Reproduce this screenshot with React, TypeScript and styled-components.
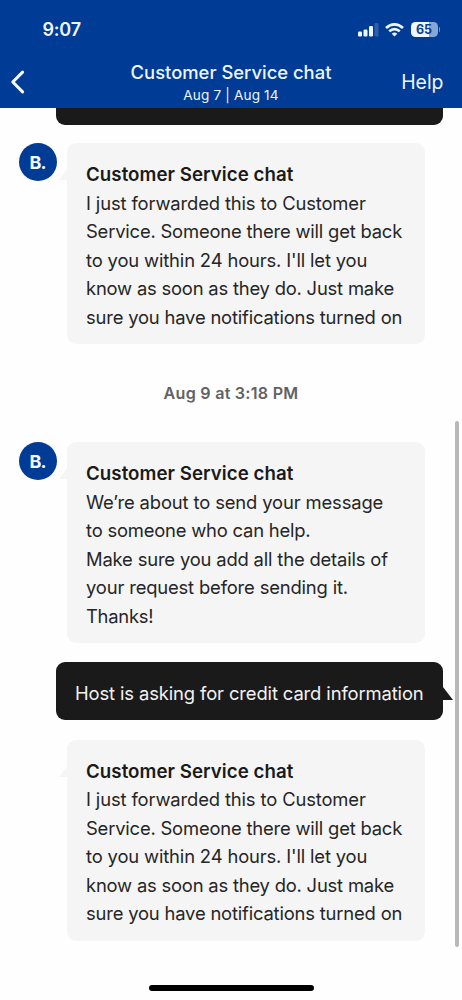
import React from "react";
import styled, { createGlobalStyle } from "styled-components";

const GlobalStyle = createGlobalStyle`
  * { box-sizing: border-box; }
  body {
    margin: 0;
    background: #fff;
    font-family: Inter, "Liberation Sans", sans-serif;
    overflow: hidden;
  }
`;

const Screen = styled.div`
  position: relative;
  width: 462px;
  height: 1000px;
  display: flex;
  flex-direction: column;
  background: #fefefe;
  overflow: hidden;
`;

const Header = styled.header`
  flex: none;
  height: 107.5px;
  background: #003b95;
  color: #edf6ff;
`;

const StatusBar = styled.div`
  height: 58px;
  padding: 1px 22.5px 0 42.5px;
  display: flex;
  align-items: center;
  justify-content: space-between;
`;

const Clock = styled.span`
  font-size: 18px;
  font-weight: 600;
  letter-spacing: -0.2px;
`;

const StatusIcons = styled.div`
  display: flex;
  align-items: center;
  gap: 6.3px;
`;

const Battery = styled.div`
  position: relative;
  width: 27px;
  height: 15px;
  border-radius: 4.5px;
  background: linear-gradient(90deg, #eef6ff 66%, #86a6d6 66%);
  color: #0c3f93;
  font-size: 12.5px;
  font-weight: 700;
  line-height: 15px;
  text-align: center;
  margin-right: 2px;
  &::after {
    content: "";
    position: absolute;
    right: -2.5px;
    top: 5px;
    width: 1.5px;
    height: 5px;
    border-radius: 0 2px 2px 0;
    background: #6f92c9;
  }
`;

const NavBar = styled.nav`
  height: 49.5px;
  display: grid;
  grid-template-columns: 100px 1fr 100px;
  align-items: center;
`;

const BackIcon = styled.svg`
  margin: 0 0 2px 10px;
`;

const Heading = styled.div`
  display: flex;
  flex-direction: column;
  align-items: center;
  white-space: nowrap;
`;

const Title = styled.span`
  font-size: 18.4px;
  line-height: 25px;
  font-weight: 500;
`;

const Dates = styled.span`
  font-size: 13.6px;
  line-height: 20px;
  letter-spacing: 0.15px;
`;

const Help = styled.a`
  justify-self: end;
  margin-right: 18.5px;
  padding-bottom: 1px;
  font-size: 19.4px;
`;

const Thread = styled.main`
  flex: 1;
  display: flex;
  flex-direction: column;
`;

const SentBubble = styled.div<{ $clipped?: boolean }>`
  position: relative;
  margin: 0 19px 0 55.5px;
  height: ${(p) => (p.$clipped ? "17px" : "58.5px")};
  padding: 4px 0 0 19.5px;
  display: flex;
  align-items: center;
  border-radius: ${(p) => (p.$clipped ? "0 0 9px 9px" : "9px")};
  background: #1a1a1a;
  color: #f2f2f2;
  font-size: 18.4px;
  letter-spacing: -0.12px;
  white-space: nowrap;
`;

const SentTail = styled.svg`
  position: absolute;
  right: -9.5px;
  top: 25px;
`;

const Row = styled.div<{ $top: number }>`
  display: flex;
  align-items: flex-start;
  margin-top: ${(p) => p.$top}px;
`;

const Avatar = styled.div<{ $hidden?: boolean }>`
  width: 38px;
  height: 38px;
  margin: 0 10px 0 19px;
  border-radius: 50%;
  background: ${(p) => (p.$hidden ? "transparent" : "#003b95")};
  color: #f4f9ff;
  display: flex;
  align-items: center;
  justify-content: center;
  padding: 1px 1px 0 0;
  font-size: 18px;
  font-weight: 700;
  letter-spacing: -0.9px;
`;

const Card = styled.div`
  position: relative;
  width: 357.5px;
  height: 201px;
  padding: 17px 0 0 19px;
  border-radius: 9px;
  background: #f5f5f5;
  color: #262626;
`;

const CardTail = styled.svg`
  position: absolute;
  left: -8px;
  top: 25px;
`;

const Line = styled.div<{ $track?: number }>`
  height: 28.5px;
  line-height: 28.5px;
  font-size: 18.4px;
  letter-spacing: ${(p) => p.$track ?? 0}px;
  white-space: nowrap;
`;

const Sender = styled(Line)`
  line-height: 30px;
  font-size: 18.7px;
  font-weight: 600;
  color: #1a1a1a;
`;

const DateLabel = styled.div`
  height: 98px;
  display: flex;
  align-items: center;
  justify-content: center;
  font-size: 16.1px;
  font-weight: 600;
  letter-spacing: 0.25px;
  color: #626262;
`;

const Scrollbar = styled.div`
  position: absolute;
  left: 455px;
  top: 421px;
  width: 3.5px;
  height: 526px;
  border-radius: 2px;
  background: #b9b9b9;
`;

const HomeIndicator = styled.div`
  position: absolute;
  left: 149px;
  bottom: 9.5px;
  width: 164.5px;
  height: 6px;
  border-radius: 3px;
  background: #000;
`;

type TextLine = [string, number];

const forwarded: TextLine[] = [
  ["I just forwarded this to Customer", -0.13],
  ["Service. Someone there will get back", -0.19],
  ["to you within 24 hours. I'll let you", -0.15],
  ["know as soon as they do. Just make", -0.2],
  ["sure you have notifications turned on", -0.18],
];

const beforeSending: TextLine[] = [
  ["We’re about to send your message", -0.13],
  ["to someone who can help.", -0.2],
  ["Make sure you add all the details of", -0.17],
  ["your request before sending it.", -0.16],
  ["Thanks!", -0.25],
];

function Received({ lines, top, avatar = true }: { lines: TextLine[]; top: number; avatar?: boolean }) {
  return (
    <Row $top={top}>
      <Avatar $hidden={!avatar}>{avatar ? "B." : null}</Avatar>
      <Card>
        <CardTail width="9" height="13" viewBox="0 0 9 13">
          <path d="M9 0L0 12H9Z" fill="#f5f5f5" />
        </CardTail>
        <Sender $track={0.05}>Customer Service chat</Sender>
        {lines.map(([text, track]) => (
          <Line key={text} $track={track}>{text}</Line>
        ))}
      </Card>
    </Row>
  );
}

export default function App() {
  return (
    <>
      <GlobalStyle />
      <Screen>
        <Header>
          <StatusBar>
            <Clock>9:07</Clock>
            <StatusIcons>
              <svg width="21" height="15" viewBox="0 0 21 15" fill="#eef6ff">
                <rect x="0" y="9.5" width="4" height="5" rx="1.2" />
                <rect x="5.5" y="7.5" width="4" height="7" rx="1.2" />
                <rect x="11" y="4" width="4" height="10.5" rx="1.2" />
                <rect x="16.5" y="1" width="4" height="13.5" rx="1.2" opacity=".2" />
              </svg>
              <svg width="19" height="14" viewBox="0 0 19 14" fill="none" stroke="#eef6ff">
                <path d="M1 5.1Q9.5-2.3 18 5.1" strokeWidth="2.7" />
                <path d="M4.2 8.3Q9.5 3.8 14.8 8.3" strokeWidth="2.6" />
                <path d="M6.7 10.7Q9.5 8.5 12.3 10.7L9.5 13.6Z" fill="#eef6ff" stroke="none" />
              </svg>
              <Battery>65</Battery>
            </StatusIcons>
          </StatusBar>
          <NavBar>
            <BackIcon width="16" height="24" viewBox="0 0 16 24" fill="none" stroke="#f4faff" strokeWidth="3.1" strokeLinecap="round" strokeLinejoin="round">
              <path d="M12.6 2.2L2.8 12L12.6 21.8" />
            </BackIcon>
            <Heading>
              <Title>Customer Service chat</Title>
              <Dates>Aug 7 | Aug 14</Dates>
            </Heading>
            <Help>Help</Help>
          </NavBar>
        </Header>
        <Thread>
          <SentBubble $clipped />
          <Received top={18.5} lines={forwarded} />
          <DateLabel>Aug 9 at 3:18 PM</DateLabel>
          <Received top={0} lines={beforeSending} />
          <Row $top={18.5} />
          <SentBubble>
            Host is asking for credit card information
            <SentTail width="10" height="13" viewBox="0 0 10 13">
              <path d="M0 0L10 13H0Z" fill="#1a1a1a" />
            </SentTail>
          </SentBubble>
          <Received top={19.7} lines={forwarded} avatar={false} />
        </Thread>
        <Scrollbar />
        <HomeIndicator />
      </Screen>
    </>
  );
}
